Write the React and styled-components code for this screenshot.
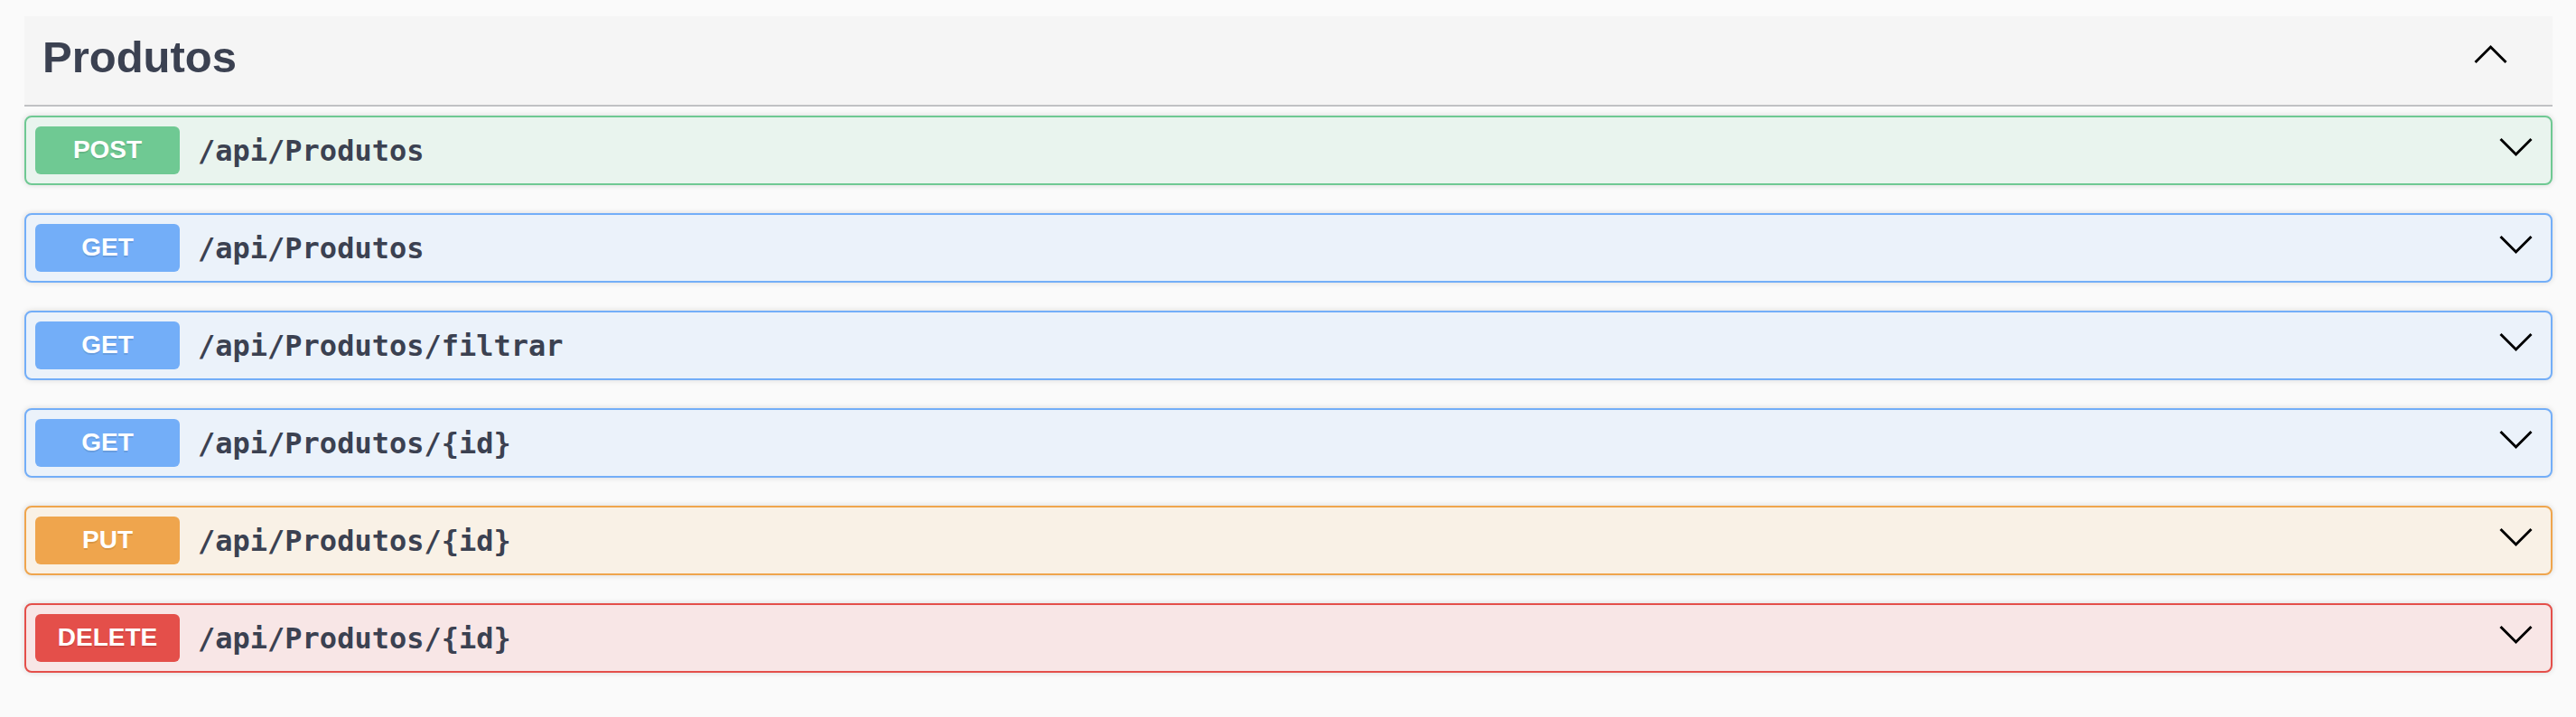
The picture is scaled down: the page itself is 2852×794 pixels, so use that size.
import React from "react";
import styled, { createGlobalStyle } from "styled-components";

const Global = createGlobalStyle`
  html, body { margin: 0; padding: 0; background: #fafafa; }
  body { font-family: "Liberation Sans", Arial, sans-serif; }
`;

const METHODS = {
  POST: { color: "#6fc993", bg: "#e9f4ee" },
  GET: { color: "#73aef8", bg: "#ebf2fa" },
  PUT: { color: "#efa54d", bg: "#f9f1e6" },
  DELETE: { color: "#e44f4a", bg: "#f8e6e6" },
};

const Page = styled.div`
  padding: 18px 26px 48px 27px;
  box-sizing: border-box;
  width: 100%;
`;

const Section = styled.section`
  display: flex;
  flex-direction: column;
`;

const TagHeader = styled.div`
  display: flex;
  align-items: center;
  box-sizing: border-box;
  height: 100px;
  padding: 0 20px 8px 20px;
  background: #f5f5f5;
  border-bottom: 2px solid #c0c1c4;
  margin-bottom: 10px;
`;

const TagTitle = styled.h3`
  flex: 1;
  margin: 0;
  font-family: "Liberation Sans", Arial, sans-serif;
  font-weight: 700;
  font-size: 49px;
  color: #3b4151;
`;

const Chevron = styled.svg`
  display: block;
  flex: none;
  margin-right: ${(p) => p.$mr}px;
  margin-bottom: ${(p) => p.$mb}px;
`;

const Ops = styled.div`
  display: flex;
  flex-direction: column;
  gap: 31px;
`;

const Opblock = styled.div`
  display: flex;
  align-items: center;
  box-sizing: border-box;
  height: 77px;
  padding: 0 10px;
  border: 2px solid ${(p) => p.$color};
  background: ${(p) => p.$bg};
  border-radius: 8px;
  box-shadow: 0 0 6px rgba(0, 0, 0, 0.14);
`;

const Method = styled.span`
  display: flex;
  align-items: center;
  justify-content: center;
  box-sizing: border-box;
  width: 160px;
  height: 53px;
  padding-bottom: 2px;
  border-radius: 6px;
  background: ${(p) => p.$color};
  color: #fff;
  font-family: "Liberation Sans", Arial, sans-serif;
  font-weight: 700;
  font-size: 28px;
  text-shadow: 0 2px 0 rgba(0, 0, 0, 0.1);
`;

const Path = styled.span`
  flex: 1;
  padding: 0 20px;
  font-family: "DejaVu Sans Mono", "Liberation Mono", monospace;
  font-weight: 700;
  font-size: 32px;
  color: #3b4151;
`;

const ChevronDown = () => (
  <Chevron $mr={10} $mb={8} width="37" height="22" viewBox="0 0 37 22">
    <polyline points="1.5,2 18.5,19 35.5,2" fill="none" stroke="#000" strokeWidth="3" />
  </Chevron>
);

const ChevronUp = () => (
  <Chevron $mr={30} $mb={6} width="37" height="22" viewBox="0 0 37 22">
    <polyline points="1.5,20 18.5,3 35.5,20" fill="none" stroke="#000" strokeWidth="3" />
  </Chevron>
);

const ops = [
  { method: "POST", path: "/api/Produtos" },
  { method: "GET", path: "/api/Produtos" },
  { method: "GET", path: "/api/Produtos/filtrar" },
  { method: "GET", path: "/api/Produtos/{id}" },
  { method: "PUT", path: "/api/Produtos/{id}" },
  { method: "DELETE", path: "/api/Produtos/{id}" },
];

export default function App() {
  return (
    <>
      <Global />
      <Page>
        <Section>
          <TagHeader>
            <TagTitle>Produtos</TagTitle>
            <ChevronUp />
          </TagHeader>
          <Ops>
            {ops.map((op, i) => {
              const m = METHODS[op.method];
              return (
                <Opblock key={i} $color={m.color} $bg={m.bg}>
                  <Method $color={m.color}>{op.method}</Method>
                  <Path>{op.path}</Path>
                  <ChevronDown />
                </Opblock>
              );
            })}
          </Ops>
        </Section>
      </Page>
    </>
  );
}
